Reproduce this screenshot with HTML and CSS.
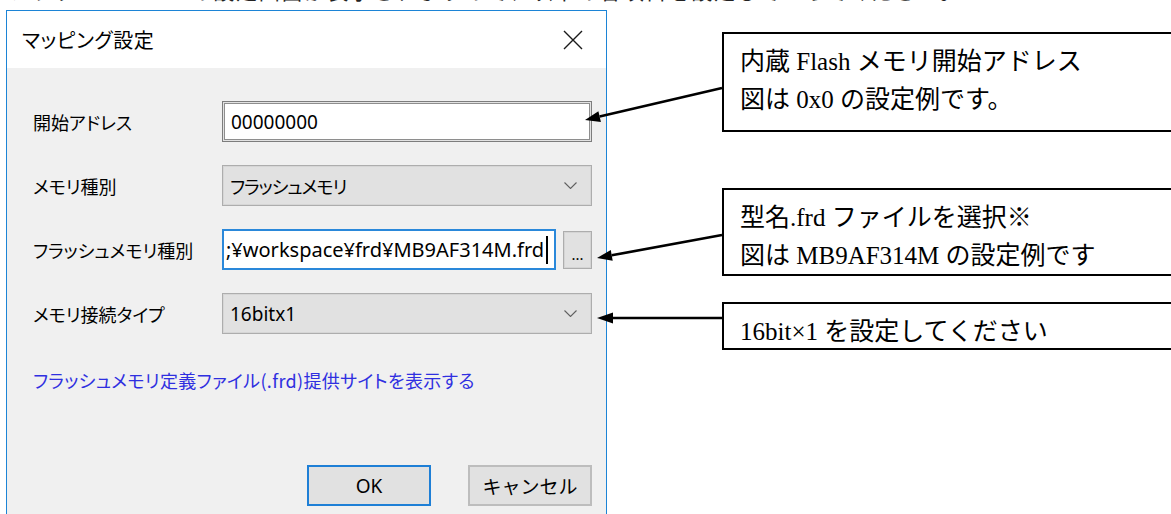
FILE: index.html
```html
<!DOCTYPE html>
<html lang="ja">
<head>
<meta charset="utf-8">
<title>マッピング設定</title>
<link rel="stylesheet" href="styles.css">
</head>
<body>
<p class="lead">フラッシュメモリの設定画面が表示されますので、以下の各項目を設定していってください。</p>

<div class="figure">
  <div class="dialog">
    <div class="titlebar">
      <span class="title">マッピング設定</span>
      <svg class="close" width="20" height="20" viewBox="0 0 20 20" aria-label="閉じる">
        <path d="M1 1L19 19M19 1L1 19" stroke="#1a1a1a" stroke-width="1.4" fill="none"/>
      </svg>
    </div>

    <div class="dialog-body">
      <div class="form">
        <div class="row">
          <span class="label">開始アドレス</span>
          <div class="field textbox"><span class="value">00000000</span></div>
        </div>
        <div class="row">
          <span class="label">メモリ種別</span>
          <div class="field combo">
            <span class="value kana">フラッシュメモリ</span>
            <svg class="chevron" width="13" height="7" viewBox="0 0 13 7"><path d="M0.5 0.5L6.5 6.5L12.5 0.5" stroke="#606060" stroke-width="1.1" fill="none"/></svg>
          </div>
        </div>
        <div class="row">
          <span class="label">フラッシュメモリ種別</span>
          <div class="field-group">
            <div class="field textbox focused"><span class="value path">;¥workspace¥frd¥MB9AF314M.frd</span><span class="caret"></span></div>
            <button class="browse" type="button">...</button>
          </div>
        </div>
        <div class="row">
          <span class="label">メモリ接続タイプ</span>
          <div class="field combo">
            <span class="value">16bitx1</span>
            <svg class="chevron" width="13" height="7" viewBox="0 0 13 7"><path d="M0.5 0.5L6.5 6.5L12.5 0.5" stroke="#606060" stroke-width="1.1" fill="none"/></svg>
          </div>
        </div>
      </div>

      <a class="link">フラッシュメモリ定義ファイル(.frd)提供サイトを表示する</a>

      <div class="buttons">
        <button class="btn default" type="button">OK</button>
        <button class="btn" type="button">キャンセル</button>
      </div>
    </div>
  </div>

  <div class="notes">
    <div class="note note-address">内蔵 Flash メモリ開始アドレス<br>図は 0x0 の設定例です。</div>
    <div class="note note-file">型名.frd ファイルを選択※<br>図は MB9AF314M の設定例です</div>
    <div class="note note-bus">16bit×1 を設定してください</div>
  </div>
</div>

<!-- leader arrows from the notes to the dialog fields -->
<svg class="arrows" width="1171" height="514" viewBox="0 0 1171 514">
  <g stroke="#000" stroke-width="2.6" fill="none">
    <line x1="722" y1="88" x2="599.6" y2="116.6"/>
    <line x1="722" y1="235" x2="611.7" y2="255.3"/>
    <line x1="722" y1="318" x2="611" y2="318"/>
  </g>
  <g fill="#000">
    <polygon points="585,120 600.9,122 598.4,111.2"/>
    <polygon points="597,258 612.7,260.7 610.8,249.9"/>
    <polygon points="597,318 613,323.5 613,312.5"/>
  </g>
</svg>
</body>
</html>
```

FILE: styles.css
```css
html, body {
  margin: 0;
  padding: 0;
}

body {
  position: relative;
  width: 1171px;
  height: 514px;
  overflow: hidden;
  background: #fff;
  font-family: "Noto Sans CJK JP", sans-serif;
}

/* body text of the manual page, scrolled partly out of view */
.lead {
  margin: -22px 0 0 8px;
  font: 21px/28px "Liberation Serif", "Noto Sans CJK JP", serif;
  letter-spacing: 1.8px;
  white-space: nowrap;
  color: #222;
}

.figure {
  display: flex;
  align-items: flex-start;
  margin-top: 4px;
}

/* ---------- dialog window ---------- */
.dialog {
  flex: none;
  width: 601px;
  height: 560px;
  box-sizing: border-box;
  margin-left: 6px;
  border: 1px solid #1c84d6;
  background: #f0f0f0;
  font-family: "Noto Sans", "Noto Sans CJK JP", sans-serif;
  font-feature-settings: "palt";
  color: #000;
}

.titlebar {
  display: flex;
  align-items: center;
  justify-content: space-between;
  height: 57px;
  padding: 0 23px 0 15px;
  background: #fff;
}

.title {
  font-family: "Noto Sans CJK JP", sans-serif;
  font-size: 20px;
  letter-spacing: 0.6px;
}

.close {
  display: block;
}

.dialog-body {
  padding: 33px 14px 0 26px;
}

.form {
  display: flex;
  flex-direction: column;
  gap: 23px;
}

.row {
  display: flex;
  align-items: center;
  height: 41px;
}

.label {
  width: 189px;
  flex: none;
  font-family: "Noto Sans CJK JP", sans-serif;
  font-size: 18px;
}

.field {
  display: flex;
  align-items: center;
  width: 370px;
  height: 41px;
  box-sizing: border-box;
  font-size: 19px;
  white-space: nowrap;
  overflow: hidden;
}

.textbox {
  padding-left: 8px;
  background: #fff;
  border: 1px solid #7d7d7d;
  box-shadow: inset 0 0 0 1px #e2e2e2, inset 0 0 0 2px #8e8e8e;
}

.textbox.focused {
  flex: 1;
  width: auto;
  padding-left: 2px;
  border: 2px solid #2a88da;
  box-shadow: none;
}

.path {
  font-size: 20px;
}

.caret {
  flex: none;
  width: 2px;
  height: 28px;
  margin-left: 2px;
  background: #000;
}

.combo {
  justify-content: space-between;
  padding: 0 14px 0 7px;
  background: #e1e1e1;
  border: 1px solid #adadad;
  box-shadow: inset 0 0 0 1px #d6d6d6;
}

.kana {
  font-family: "Noto Sans CJK JP", sans-serif;
  font-size: 18px;
  letter-spacing: -1px;
}

.chevron {
  display: block;
  flex: none;
}

.field-group {
  display: flex;
  align-items: center;
  gap: 7px;
  width: 370px;
}

.browse {
  flex: none;
  width: 29px;
  height: 38px;
  padding: 10px 0 0;
  box-sizing: border-box;
  background: #e1e1e1;
  border: 1px solid #adadad;
  box-shadow: inset 0 0 0 1px #d4d4d4;
  font: 15px/1 "Noto Sans", sans-serif;
  color: #000;
}

.link {
  display: block;
  margin-top: 34px;
  font-family: "Noto Sans CJK JP", sans-serif;
  font-size: 18px;
  line-height: 24px;
  letter-spacing: 0.35px;
  color: #2f2fe0;
}

.buttons {
  display: flex;
  justify-content: flex-end;
  gap: 37px;
  margin-top: 73px;
}

.btn {
  width: 124px;
  height: 41px;
  box-sizing: border-box;
  background: #e1e1e1;
  border: 2px solid #bdbdbd;
  font-family: "Noto Sans", "Noto Sans CJK JP", sans-serif;
  font-size: 19px;
  color: #000;
}

.btn.default {
  border-color: #1e7fd6;
}

/* ---------- callout notes ---------- */
.notes {
  flex: none;
  width: 500px;
  margin: 22px 0 0 115px;
}

.note {
  box-sizing: border-box;
  padding: 9px 0 0 16px;
  border: 2px solid #000;
  font: 25px/38px "Liberation Serif", "Noto Sans CJK JP", serif;
  color: #000;
  white-space: nowrap;
}

.note-address {
  height: 100px;
}

.note-file {
  height: 88px;
  margin-top: 56px;
}

.note-bus {
  height: 48px;
  margin-top: 26px;
}

.arrows {
  position: absolute;
  top: 0;
  left: 0;
  pointer-events: none;
}
```
